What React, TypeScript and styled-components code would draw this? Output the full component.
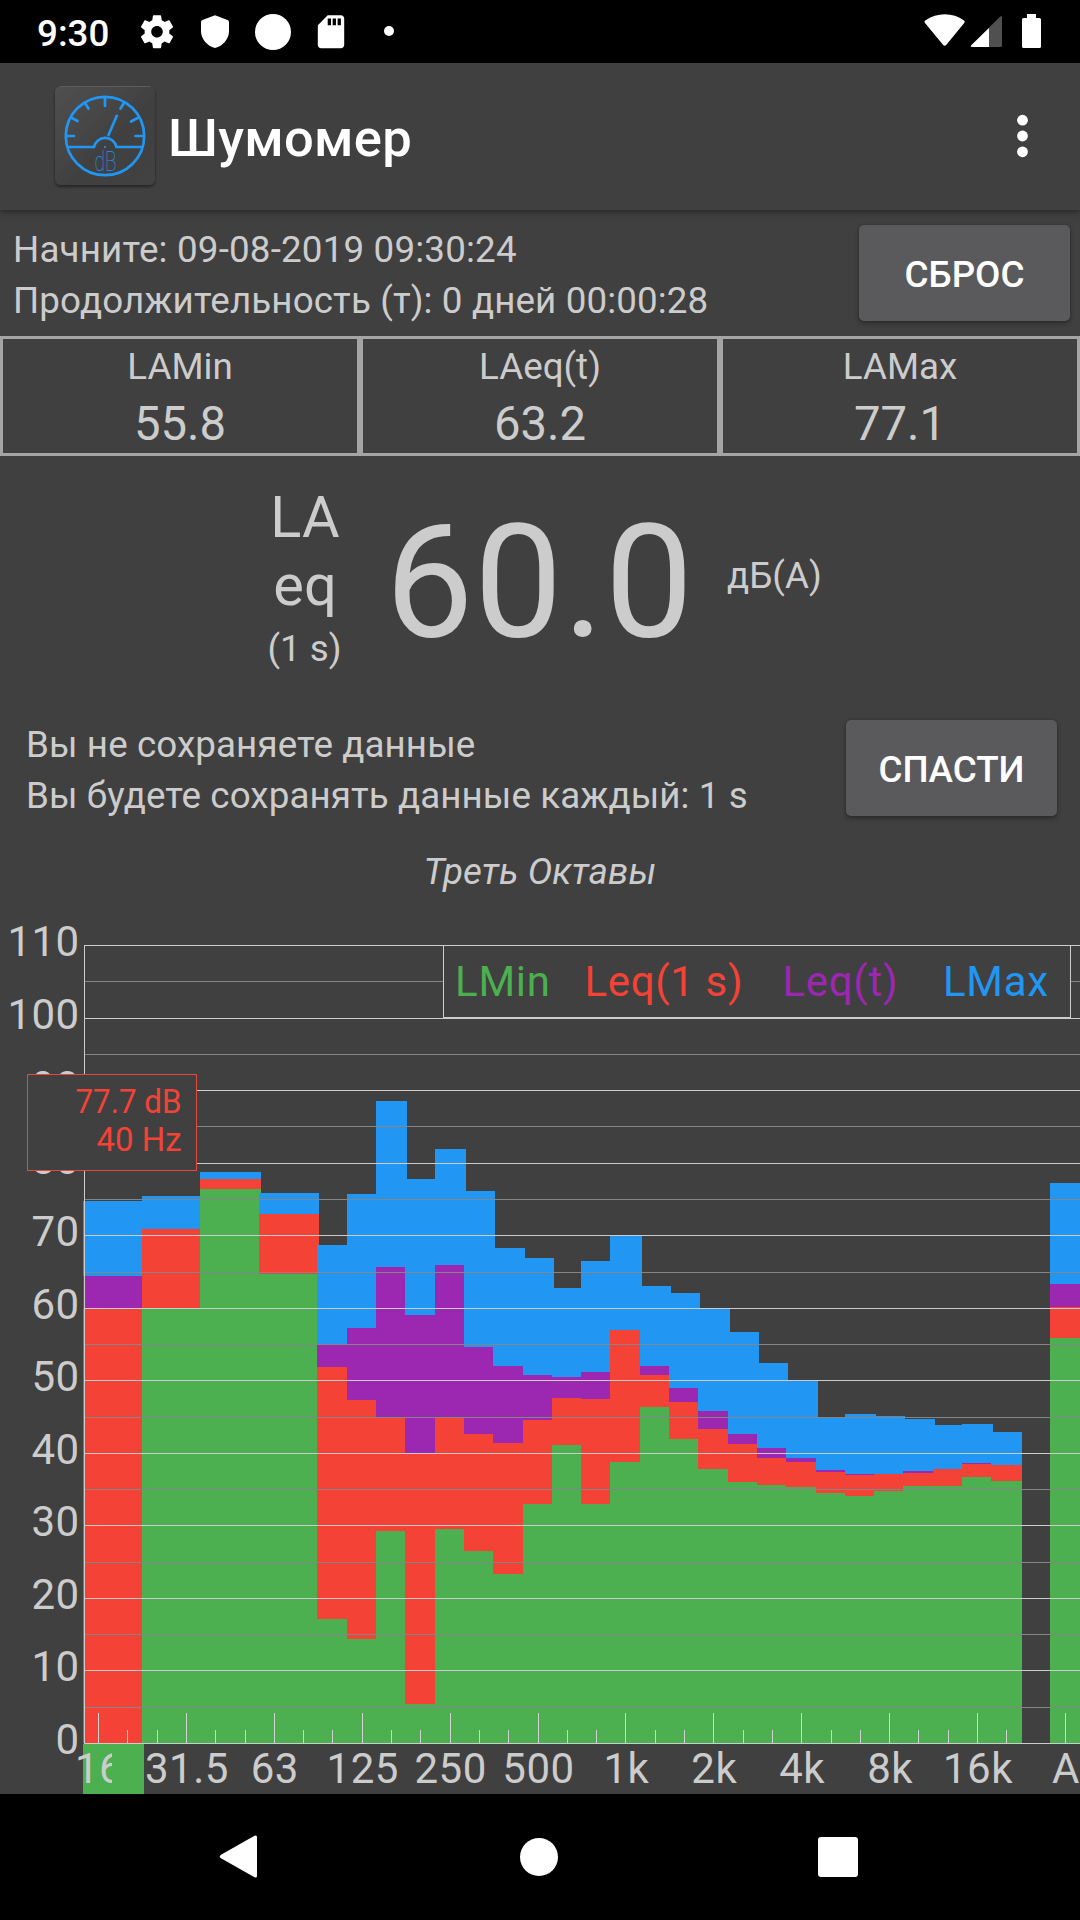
import React from 'react';
import styled, { createGlobalStyle } from 'styled-components';

const colors = {
  surface: '#404040',
  text: '#cccccc',
  border: '#a5a5a5',
  button: '#5a5a5c',
  green: '#4caf50',
  red: '#f44336',
  purple: '#9c27b0',
  blue: '#2196f3',
};

const GlobalStyle = createGlobalStyle`
  * { box-sizing: border-box; }
  body { margin: 0; background: #000; }
`;

const Screen = styled.div`
  width: 1080px;
  height: 1920px;
  display: flex;
  flex-direction: column;
  overflow: hidden;
  background: ${colors.surface};
  color: ${colors.text};
  font-family: Roboto, 'Noto Sans', sans-serif;
  font-size: 36.75px;
`;

const StatusBar = styled.header`
  height: 63px;
  flex: none;
  display: flex;
  align-items: center;
  justify-content: space-between;
  padding: 0 37px 0 37px;
  background: #000;
  color: #fff;
`;

const StatusGroup = styled.div`
  display: flex;
  align-items: center;
`;

const Clock = styled.span`
  width: 100px;
  font-weight: 500;
  line-height: 63px;
  padding-top: 3px;
`;

const AppBar = styled.div`
  height: 147px;
  flex: none;
  display: flex;
  align-items: center;
  padding: 0 47px 1px 50px;
  background: ${colors.surface};
  box-shadow: 0 2px 6px rgba(0, 0, 0, 0.42);
  z-index: 1;
`;

const Title = styled.h1`
  margin: 0 0 0 6px;
  flex: 1;
  padding-top: 4px;
  font-size: 52.5px;
  font-weight: 500;
  line-height: 62px;
  letter-spacing: 0.3px;
  color: #fff;
`;

const MenuButton = styled.button`
  width: 21px;
  height: 54px;
  padding: 0;
  border: 0;
  background: none;
  display: flex;
`;

const InfoRow = styled.section<{ $height: number; $pad: string }>`
  height: ${(p) => p.$height}px;
  flex: none;
  display: flex;
  justify-content: space-between;
  align-items: flex-start;
  padding: ${(p) => p.$pad};
`;

const Lines = styled.div`
  margin-top: -1px;
  line-height: 51px;
  white-space: nowrap;
`;

const Line = styled.div<{ $spacing: number }>`
  letter-spacing: ${(p) => p.$spacing}px;
`;

const RaisedButton = styled.button`
  width: 211px;
  height: 96px;
  padding: 2px 0 0;
  border: 0;
  border-radius: 5px;
  background: ${colors.button};
  box-shadow: 0 3px 5px rgba(0, 0, 0, 0.28), 0 0 3px rgba(0, 0, 0, 0.2);
  color: #fff;
  font: 500 36.75px/43px Roboto, sans-serif;
`;

const Stats = styled.section`
  height: 120px;
  flex: none;
  display: grid;
  grid-template-columns: repeat(3, 1fr);
`;

const StatCell = styled.div`
  border: 3px solid ${colors.border};
  display: flex;
  flex-direction: column;
  align-items: center;
  padding-top: 6px;
`;

const StatLabel = styled.span`
  line-height: 43px;
`;

const StatValue = styled.span`
  margin-top: 9px;
  font-size: 47.25px;
  line-height: 55px;
`;

const Reading = styled.section`
  height: 264px;
  flex: none;
  display: flex;
  align-items: flex-start;
  padding-left: 267px;
`;

const ReadingLabel = styled.div`
  width: 76px;
  padding-top: 27px;
  display: flex;
  flex-direction: column;
  align-items: center;
`;

const LabelBig = styled.span`
  font-size: 57.75px;
  line-height: 68px;
`;

const LabelSmall = styled.span`
  margin: 8px 1px 0 0;
  line-height: 43px;
`;

const ReadingValue = styled.div`
  margin: 34px 0 0 42px;
  width: 342px;
  font-size: 157.5px;
  line-height: 184px;
  letter-spacing: 0.4px;
`;

const Unit = styled.div`
  padding-top: 98px;
  line-height: 43px;
`;

const ChartTitle = styled.h2`
  height: 43px;
  flex: none;
  margin: 0;
  text-align: center;
  font-size: 36.75px;
  font-weight: 400;
  font-style: italic;
  line-height: 43px;
  letter-spacing: 0.1px;
`;

const ChartSvg = styled.svg`
  display: block;
  flex: none;
  font-family: Roboto, sans-serif;
  font-size: 42px;
`;

const NavBar = styled.nav`
  height: 126px;
  flex: none;
  background: #000;
  display: flex;
  align-items: center;
  justify-content: space-between;
  padding: 0 218px 0 215px;
`;

/* Chart geometry */
const TOP = 893;
const AXIS_Y = 1743;
const X0 = 83;
const STEP = 29.3;
const gridY = (n: number) => Math.floor(1743.5 - 36.265 * n);

type Bar = { k: number; span?: number; v: [number, number, number, number] };

/* v: bar heights for LMax, Leq(t), Leq(1 s), LMin */
const narrow: [number, number, number, number][] = [
  [498, 399, 376, 124],
  [549, 415, 343, 104],
  [642, 476, 325, 212],
  [564, 428, 289, 39],
  [594, 478, 325, 214],
  [552, 396, 309, 192],
  [495, 377, 300, 169],
  [485, 368, 323, 239],
  [455, 366, 345, 298],
  [482, 371, 344, 239],
  [507, 0, 413, 281],
  [457, 377, 368, 336],
  [450, 355, 341, 304],
  [434, 332, 314, 274],
  [411, 309, 299, 261],
  [380, 295, 285, 258],
  [362, 285, 281, 256],
  [326, 273, 271, 250],
  [329, 269, 268, 247],
  [327, 0, 269, 252],
  [324, 272, 270, 257],
  [318, 0, 274, 257],
  [319, 280, 279, 266],
  [311, 0, 278, 262],
];

const bars: Bar[] = [
  { k: 0, span: 2, v: [542, 467, 434, 0] },
  { k: 2, span: 2, v: [547, 0, 514, 434] },
  { k: 4, span: 2, v: [571, 0, 564, 554] },
  { k: 6, span: 2, v: [550, 0, 529, 469] },
  ...narrow.map((v, i) => ({ k: 8 + i, v })),
  { k: 33, v: [560, 459, 436, 405] },
];

const seriesColors = [colors.blue, colors.purple, colors.red, colors.green];
const xLabels = ['16', '31.5', '63', '125', '250', '500', '1k', '2k', '4k', '8k', '16k', 'A'];

const legend = [
  { label: 'LMin', x: 455, w: 95, color: colors.green },
  { label: 'Leq(1 s)', x: 584.5, w: 158, color: colors.red },
  { label: 'Leq(t)', x: 782.5, w: 115, color: colors.purple },
  { label: 'LMax', x: 943, w: 105, color: colors.blue },
];

function Spectrum() {
  return (
    <ChartSvg width="1080" height={1794 - TOP} viewBox={`0 ${TOP} 1080 ${1794 - TOP}`}>
      <defs>
        <clipPath id="firstLabel">
          <rect x="70" y="1744" width="42" height="50" />
        </clipPath>
      </defs>
      <g shapeRendering="crispEdges">
        {bars.map(({ k, span = 1, v }) => {
          const x = Math.round(X0 + k * STEP);
          const w = Math.round(X0 + (k + span) * STEP) - x + 2;
          return v.map((h, i) => (
            <rect key={`${k}-${i}`} x={x} y={AXIS_Y - h} width={w - (k === 31 ? 1 : 0)} height={h} fill={seriesColors[i]} />
          ));
        })}
        {Array.from({ length: 23 }, (_, n) => (
          <rect key={n} x="84" y={gridY(n)} width="996" height="1" fill={n % 2 ? '#858585' : '#cccccc'} />
        ))}
        <rect x="84" y="945" width="1" height="799" fill="#ccc" />
        {Array.from({ length: 34 }, (_, k) => k)
          .filter((k) => k !== 32)
          .map((k) => {
            const h = k % 3 ? 13 : 30;
            return <rect key={k} x={Math.floor(98.5 + STEP * k)} y={AXIS_Y - h} width="1" height={h} fill="#d0d4d0" />;
          })}
        <rect x="83" y="1744" width="61" height="50" fill={colors.green} />
      </g>
      <g fill={colors.text} textAnchor="end" letterSpacing="0.4">
        {Array.from({ length: 12 }, (_, n) => (
          <text key={n} x="79.4" y={gridY(n * 2) + 11}>{n * 10}</text>
        ))}
      </g>
      <g fill={colors.text} textAnchor="middle" letterSpacing="0.5">
        {xLabels.map((label, i) => (
          <text key={label} x={99 + STEP * 3 * i} y="1783" clipPath={i === 0 ? 'url(#firstLabel)' : undefined}>
            {label}
          </text>
        ))}
      </g>
      <rect x="443.5" y="945.5" width="627" height="72" fill={colors.surface} stroke="#ccc" />
      {legend.map((l) => (
        <text key={l.label} x={l.x} y="996" fill={l.color} textLength={l.w}>{l.label}</text>
      ))}
      <rect x="27.5" y="1074.5" width="169" height="96" fill={colors.surface} stroke="#e5483e" />
      <g fill={colors.red} fontSize="32.5">
        <text x="75.5" y="1113" textLength="106" lengthAdjust="spacingAndGlyphs">77.7 dB</text>
        <text x="96.5" y="1151" textLength="85" lengthAdjust="spacingAndGlyphs">40 Hz</text>
      </g>
    </ChartSvg>
  );
}

const NotificationIcons = () => (
  <svg width="260" height="63" viewBox="137 0 260 63" fill="#fff">
    <path
      transform="translate(137.2 12) scale(1.65)"
      d="M19.43 12.98c.04-.32.07-.64.07-.98s-.03-.66-.07-.98l2.11-1.65c.19-.15.24-.42.12-.64l-2-3.46c-.12-.22-.39-.3-.61-.22l-2.49 1c-.52-.4-1.08-.73-1.69-.98l-.38-2.65C14.46 2.18 14.25 2 14 2h-4c-.25 0-.46.18-.49.42l-.38 2.65c-.61.25-1.17.59-1.69.98l-2.49-1c-.23-.09-.49 0-.61.22l-2 3.46c-.13.22-.07.49.12.64l2.11 1.65c-.04.32-.07.65-.07.98s.03.66.07.98l-2.11 1.65c-.19.15-.24.42-.12.64l2 3.46c.12.22.39.3.61.22l2.49-1c.52.4 1.08.73 1.69.98l.38 2.65c.03.24.24.42.49.42h4c.25 0 .46-.18.49-.42l.38-2.65c.61-.25 1.17-.59 1.69-.98l2.49 1c.23.09.49 0 .61-.22l2-3.46c.12-.22.07-.49-.12-.64l-2.11-1.65zM12 15.5c-1.93 0-3.5-1.57-3.5-3.5s1.57-3.5 3.5-3.5 3.5 1.57 3.5 3.5-1.57 3.5-3.5 3.5z"
    />
    <path d="M215 15.3L227.5 20Q229 20.6 229 22V31C229 39 223 46 215 48C207 46 201 39 201 31V22Q201 20.6 202.5 20Z" />
    <circle cx="273" cy="32" r="18" />
    <path
      transform="translate(311.2 12) scale(1.65)"
      d="M18 2h-8L4.02 8 4 20c0 1.1.9 2 2 2h12c1.1 0 2-.9 2-2V4c0-1.1-.9-2-2-2zm-6 6h-2V4h2v4zm3 0h-2V4h2v4zm3 0h-2V4h2v4z"
    />
    <circle cx="389" cy="31" r="5" />
  </svg>
);

const SystemIcons = () => (
  <svg width="120" height="63" viewBox="923 0 120 63" fill="#fff">
    <path d="M924.8 22.8Q923.8 21.5 925.2 20.5C937 12 953 12 964 20.5Q965.4 21.5 964.4 22.8L946.2 45Q944.7 46.5 943.2 45Z" />
    <path d="M1000.5 16.3Q1002 15.8 1002 17.5V45.5Q1002 47 1000.5 47H972.3Q970 47 971.3 45.3Z" fill="#505050" />
    <path d="M989 28V47H972.3Q970 47 971.3 45.3Z" />
    <path d="M1027 14h9v4h3.5q1.5 0 1.5 1.5v27q0 1.5-1.5 1.5h-16q-1.5 0-1.5-1.5v-27q0-1.5 1.5-1.5h3.5z" />
  </svg>
);

const LauncherIcon = () => (
  <svg width="112" height="114" viewBox="50 79 112 114">
    <defs>
      <linearGradient id="tile" x1="0" y1="0" x2="1" y2="1">
        <stop offset="0" stopColor="#505050" />
        <stop offset="0.55" stopColor="#414141" />
        <stop offset="1" stopColor="#424242" />
      </linearGradient>
      <filter id="tileShadow" x="-10%" y="-10%" width="120%" height="125%">
        <feDropShadow dx="0" dy="2" stdDeviation="1.6" floodColor="#000" floodOpacity="0.45" />
      </filter>
    </defs>
    <rect x="55" y="86" width="100" height="99" rx="6" fill="url(#tile)" filter="url(#tileShadow)" />
    <path d="M60 86.5H150" stroke="#5c5c5c" strokeWidth="1" />
    <g fill="none" stroke={colors.blue} strokeWidth="2.7" strokeLinecap="round">
      <circle cx="105" cy="136" r="39.2" />
      <path d="M68 147H94A11.5 11.5 0 0 1 116.5 147H142" />
      <path d="M108.5 135L116.8 115.8" />
      <path d="M105 98V106M67 136H74M135.5 136H143M85 103L88.5 108.5M124 103L120.5 108.5M71 117.5L77.5 121M138.5 117.5L131 121.5" />
    </g>
    <circle cx="105" cy="147" r="1" fill={colors.blue} />
    <text x="94.5" y="171" fill={colors.blue} fontFamily="Roboto, sans-serif" fontWeight="100" fontSize="27" textLength="22" lengthAdjust="spacingAndGlyphs">
      dB
    </text>
  </svg>
);

export default function App() {
  return (
    <>
      <GlobalStyle />
      <Screen>
        <StatusBar>
          <StatusGroup>
            <Clock>9:30</Clock>
            <NotificationIcons />
          </StatusGroup>
          <SystemIcons />
        </StatusBar>
        <AppBar>
          <LauncherIcon />
          <Title>Шумомер</Title>
          <MenuButton aria-label="Меню">
            <svg width="21" height="54" viewBox="0 0 21 54" fill="#fff">
              <circle cx="10.5" cy="11.2" r="5.4" />
              <circle cx="10.5" cy="27" r="5.4" />
              <circle cx="10.5" cy="42.8" r="5.4" />
            </svg>
          </MenuButton>
        </AppBar>
        <InfoRow $height={126} $pad="15px 10px 0 13px">
          <Lines>
            <Line $spacing={0.18}>Начните: 09-08-2019 09:30:24</Line>
            <Line $spacing={0.12}>Продолжительность (т): 0 дней 00:00:28</Line>
          </Lines>
          <RaisedButton>СБРОС</RaisedButton>
        </InfoRow>
        <Stats>
          {[['LAMin', '55.8'], ['LAeq(t)', '63.2'], ['LAMax', '77.1']].map(([label, value]) => (
            <StatCell key={label}>
              <StatLabel>{label}</StatLabel>
              <StatValue>{value}</StatValue>
            </StatCell>
          ))}
        </Stats>
        <Reading>
          <ReadingLabel>
            <LabelBig>LA</LabelBig>
            <LabelBig>eq</LabelBig>
            <LabelSmall>(1 s)</LabelSmall>
          </ReadingLabel>
          <ReadingValue>60.0</ReadingValue>
          <Unit>дБ(A)</Unit>
        </Reading>
        <InfoRow $height={130} $pad="0 23px 0 26px">
          <Lines>
            <Line $spacing={0.1}>Вы не сохраняете данные</Line>
            <Line $spacing={0.08}>Вы будете сохранять данные каждый: 1 s</Line>
          </Lines>
          <RaisedButton>СПАСТИ</RaisedButton>
        </InfoRow>
        <ChartTitle>Треть Октавы</ChartTitle>
        <Spectrum />
        <NavBar>
          <svg width="46" height="46" viewBox="0 0 46 46" fill="#fff">
            <path d="M39.5 1.8Q42 0.5 42 3.3V41.7Q42 44.5 39.5 43.2L6 24.3Q3.5 22.5 6 20.7Z" />
          </svg>
          <svg width="38" height="38" viewBox="0 0 38 38" fill="#fff"><circle cx="19" cy="19" r="19" /></svg>
          <svg width="46" height="40" viewBox="0 0 46 40" fill="#fff"><rect x="2" width="40" height="40" rx="3" /></svg>
        </NavBar>
      </Screen>
    </>
  );
}
